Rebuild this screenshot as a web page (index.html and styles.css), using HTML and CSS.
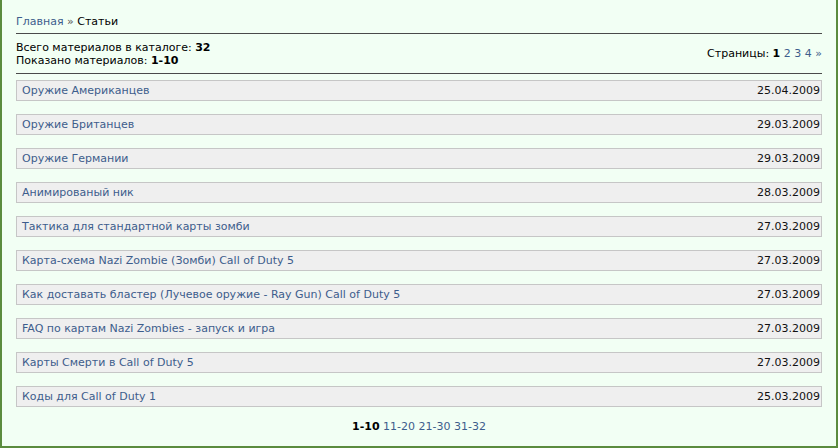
FILE: index.html
```html
<!DOCTYPE html>
<html lang="ru">
<head>
    <meta charset="UTF-8">
    <title>Статьи</title>
    <link rel="stylesheet" href="styles.css">
</head>
<body>
    <div class="frame">
        <div class="crumbs"><a href="#">Главная</a> <span class="sep">&raquo;</span> Статьи</div>
        <div class="rule"></div>

        <div class="stats">
            <div class="totals">
                Всего материалов в каталоге: <b>32</b><br>
                Показано материалов: <b>1-10</b>
            </div>
            <div class="pages">Страницы: <b>1</b> <a href="#">2</a> <a href="#">3</a> <a href="#">4</a> <a href="#" class="next">&raquo;</a></div>
        </div>
        <div class="rule"></div>

        <!-- Entries -->
        <ul class="entries">
            <li><a href="#">Оружие Американцев</a><span class="date">25.04.2009</span></li>
            <li><a href="#">Оружие Британцев</a><span class="date">29.03.2009</span></li>
            <li><a href="#">Оружие Германии</a><span class="date">29.03.2009</span></li>
            <li><a href="#">Анимированый ник</a><span class="date">28.03.2009</span></li>
            <li><a href="#">Тактика для стандартной карты зомби</a><span class="date">27.03.2009</span></li>
            <li><a href="#">Карта-схема Nazi Zombie (Зомби) Call of Duty 5</a><span class="date">27.03.2009</span></li>
            <li><a href="#">Как доставать бластер (Лучевое оружие - Ray Gun) Call of Duty 5</a><span class="date">27.03.2009</span></li>
            <li><a href="#">FAQ по картам Nazi Zombies - запуск и игра</a><span class="date">27.03.2009</span></li>
            <li><a href="#">Карты Смерти в Call of Duty 5</a><span class="date">27.03.2009</span></li>
            <li><a href="#">Коды для Call of Duty 1</a><span class="date">25.03.2009</span></li>
        </ul>

        <div class="pager"><b>1-10</b> <a href="#">11-20</a> <a href="#">21-30</a> <a href="#">31-32</a></div>
    </div>
</body>
</html>
```

FILE: styles.css
```css
body {
    margin: 0;
    padding: 0;
    font-family: "DejaVu Sans", Verdana, sans-serif;
    font-size: 11px;
    color: #000;
    background-color: #f2fff4;
}

a {
    color: #3d5d8c;
    text-decoration: none;
}

.frame {
    box-sizing: border-box;
    height: 448px;
    padding: 0 14px 0 14px;
    border-left: 2px solid #5b8c3e;
    border-right: 2px solid #5b8c3e;
    border-bottom: 2px solid #5b8c3e;
    background-color: #f2fff4;
}

.crumbs {
    padding-top: 15px;
    height: 18px;
    line-height: 13px;
}

.crumbs .sep {
    color: #555;
}

.rule {
    height: 1px;
    background-color: #4a4a4a;
}

.stats {
    display: flex;
    justify-content: space-between;
    align-items: center;
    height: 39px;
    line-height: 13px;
}

.entries {
    list-style: none;
    margin: 6px 0 0 0;
    padding: 0;
}

.entries li {
    display: flex;
    justify-content: space-between;
    height: 19px;
    line-height: 19px;
    padding: 0 1px 0 5px;
    margin-bottom: 13px;
    background-color: #efefef;
    border: 1px solid #c6c6c6;
}

.date {
    color: #111;
}

.pager {
    text-align: center;
    margin-top: 12px;
    line-height: 13px;
}
```
